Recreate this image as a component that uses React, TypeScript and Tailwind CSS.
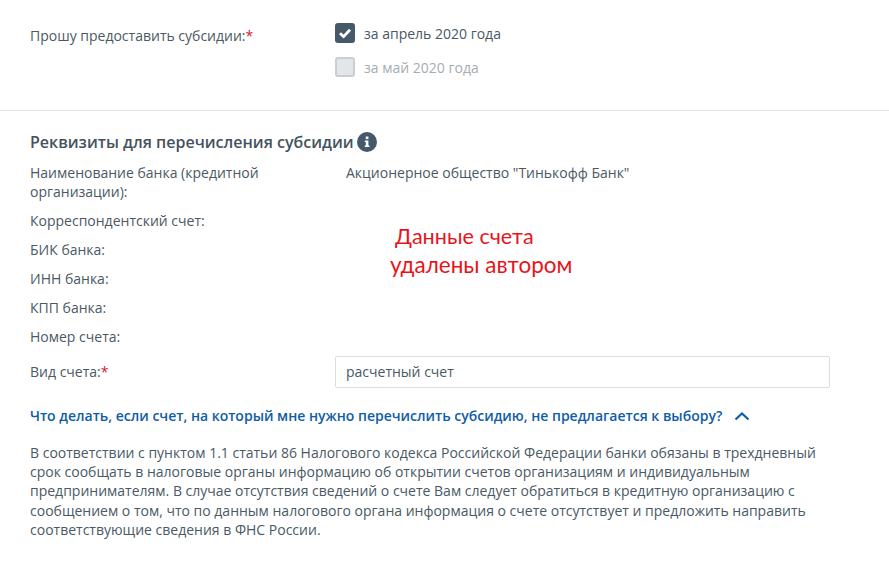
import React from 'react';

const rows = [
  { label: 'Корреспондентский счет:' },
  { label: 'БИК банка:' },
  { label: 'ИНН банка:' },
  { label: 'КПП банка:' },
  { label: 'Номер счета:' },
];

const App: React.FC = () => {
  return (
    <div className="relative h-[568px] w-[889px] overflow-hidden bg-white font-['Open_Sans',sans-serif] text-[14px] text-[#4a5964]">
      {/* субсидии */}
      <section className="flex h-[111px] border-b border-[#dfe4e6] pl-[30px] pt-[23px]">
        <div className="w-[305px] pt-[2px] leading-[22px]">
          Прошу предоставить субсидии:<span className="text-[#d0202e]">*</span>
        </div>
        <div className="flex flex-col gap-[13px]">
          <div className="flex items-start gap-[9px]">
            <span className="flex h-[20px] w-[20px] items-center justify-center rounded-[3px] bg-[#45596a]">
              <svg width="14" height="14" viewBox="0 0 14 14" fill="none">
                <path d="M2 7.2 5.6 10.6 12 3.8" stroke="#fff" strokeWidth="2.8" />
              </svg>
            </span>
            <span className="mt-[1px] leading-[20px]">за апрель 2020 года</span>
          </div>
          <div className="flex items-start gap-[9px]">
            <span className="h-[20px] w-[20px] rounded-[3px] border-2 border-[#c8cfd3] bg-[#e3e6e9]" />
            <span className="mt-[1px] leading-[20px] text-[#a5adb3]">за май 2020 года</span>
          </div>
        </div>
      </section>

      {/* реквизиты */}
      <section className="pl-[30px] pt-[20px]">
        <div className="flex items-center gap-[3px]">
          <h2 className="text-[16px] font-semibold leading-[22px] text-[#45525c]">Реквизиты для перечисления субсидии</h2>
          <span className="flex h-[20px] w-[20px] items-center justify-center rounded-full bg-[#45596a]">
            <svg width="10" height="12" viewBox="0 0 10 12" fill="#fff">
              <rect x="3.8" y="0.5" width="2.6" height="2.6" />
              <path d="M2.8 4.6H6.4V9.6H7.4V11H2.8V9.6H3.8V6H2.8Z" />
            </svg>
          </span>
        </div>

        <div className="mt-[10px] flex leading-[19px]">
          <div className="w-[316px]">
            Наименование банка (кредитной
            <br />
            организации):
          </div>
          <div>Акционерное общество "Тинькофф Банк"</div>
        </div>

        <div className="mt-[10px] flex flex-col gap-[10px] leading-[19px]">
          {rows.map((row) => (
            <div key={row.label}>{row.label}</div>
          ))}
        </div>

        <div className="mt-[10px] flex items-center">
          <div className="w-[305px] pb-[2px]">
            Вид счета:<span className="text-[#d0202e]">*</span>
          </div>
          <div className="flex h-[32px] w-[495px] items-center rounded-[2px] border border-[#d8dee3] px-[10px] pb-[2px]">
            расчетный счет
          </div>
        </div>

        <div className="mt-[18px] flex items-center gap-[12px] font-semibold leading-[20px] text-[#0f5da6]">
          <span>Что делать, если счет, на который мне нужно перечислить субсидию, не предлагается к выбору?</span>
          <svg width="16" height="10" viewBox="0 0 16 10" fill="none">
            <path d="M1.5 8.5 8 2.5 14.5 8.5" stroke="#0f5da6" strokeWidth="2.2" />
          </svg>
        </div>

        <p className="mt-[17px] w-[800px] leading-[19.2px]">
          В соответствии с пунктом 1.1 статьи 86 Налогового кодекса Российской Федерации банки обязаны в трехдневный
          срок сообщать в налоговые органы информацию об открытии счетов организациям и индивидуальным
          предпринимателям. В случае отсутствия сведений о счете Вам следует обратиться в кредитную организацию с
          сообщением о том, что по данным налогового органа информация о счете отсутствует и предложить направить
          соответствующие сведения в ФНС России.
        </p>
      </section>

      {/* пометка поверх скриншота */}
      <div className="absolute left-[395px] top-[222px] font-['Lato',sans-serif] text-[21.6px] leading-[28px] text-[#e8141c]">Данные счета</div>
      <div className="absolute left-[390px] top-[251px] font-['Lato',sans-serif] text-[22.5px] leading-[28px] text-[#e8141c]">удалены автором</div>
    </div>
  );
};

export default App;
